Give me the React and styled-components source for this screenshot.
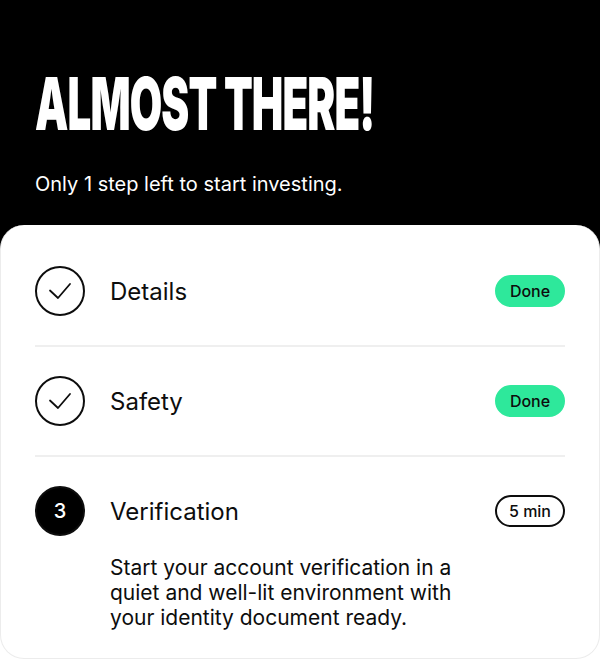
import React from 'react';
import styled, { createGlobalStyle } from 'styled-components';

const GlobalStyle = createGlobalStyle`
  * {
    box-sizing: border-box;
  }

  body {
    margin: 0;
    background: #ffffff;
    font-family: 'Inter', 'Roboto', sans-serif;
    color: #0d0d0d;
  }
`;

const steps = [
  { id: 1, title: 'Details', status: 'done' },
  { id: 2, title: 'Safety', status: 'done' },
  {
    id: 3,
    title: 'Verification',
    status: 'current',
    time: '5 min',
    text: 'Start your account verification in a quiet and well-lit environment with your identity document ready.',
  },
];

const CheckIcon = () => (
  <svg width="24" height="18" viewBox="0 0 24 18" fill="none">
    <path
      d="M2 8.5l8 7.5L22 2"
      stroke="#0d0d0d"
      strokeWidth="1.8"
      strokeLinecap="round"
      strokeLinejoin="round"
    />
  </svg>
);

const App = () => {
  return (
    <Page>
      <GlobalStyle />
      <Hero>
        <Heading>
          <span>ALMOST THERE!</span>
        </Heading>
        <Subtitle>Only 1 step left to start investing.</Subtitle>
      </Hero>

      <Card>
        {steps.map((step, i) => (
          <Step key={step.id} last={i === steps.length - 1}>
            <Marker current={step.status === 'current'}>
              {step.status === 'done' ? <CheckIcon /> : step.id}
            </Marker>
            <Content>
              <TitleRow>
                <Title>{step.title}</Title>
                {step.status === 'done' ? (
                  <Badge done>Done</Badge>
                ) : (
                  <Badge>{step.time}</Badge>
                )}
              </TitleRow>
              {step.text && <Description>{step.text}</Description>}
            </Content>
          </Step>
        ))}
      </Card>
    </Page>
  );
};

const Page = styled.div`
  width: 600px;
  min-height: 661px;
  background: #ffffff;
`;

const Hero = styled.header`
  background: #000000;
  padding: 64px 35px 72px;
  color: #ffffff;
`;

const Heading = styled.h1`
  margin: 0;
  height: 80px;
  line-height: 80px;
  font-family: 'Inter', 'Liberation Sans', sans-serif;
  font-weight: 900;
  font-size: 73px;
  letter-spacing: -1.5px;
  white-space: nowrap;

  span {
    display: inline-block;
    transform: scaleX(0.575);
    transform-origin: left center;
  }
`;

const Subtitle = styled.p`
  margin: 28px 0 0;
  font-size: 20px;
  line-height: 24px;
  font-weight: 400;
`;

const Card = styled.section`
  position: relative;
  margin-top: -43px;
  background: #ffffff;
  border: 1px solid #ececec;
  border-top: none;
  border-radius: 24px;
  padding: 12px 34px 0;
`;

const Step = styled.div`
  display: flex;
  align-items: flex-start;
  gap: 25px;
  padding: 29px 0 ${(p) => (p.last ? '28px' : '29px')};
  border-bottom: ${(p) => (p.last ? 'none' : '2px solid #efefef')};
`;

const Marker = styled.div`
  flex: 0 0 50px;
  width: 50px;
  height: 50px;
  border-radius: 50%;
  display: flex;
  align-items: center;
  justify-content: center;
  border: 2px solid #0d0d0d;
  background: ${(p) => (p.current ? '#000000' : '#ffffff')};
  color: #ffffff;
  font-size: 20px;
  font-weight: 500;
`;

const Content = styled.div`
  flex: 1;
  display: flex;
  flex-direction: column;
`;

const TitleRow = styled.div`
  height: 50px;
  display: flex;
  align-items: center;
  justify-content: space-between;
`;

const Title = styled.span`
  font-size: 24px;
  font-weight: 400;
  color: #0d0d0d;
`;

const Badge = styled.span`
  display: inline-flex;
  align-items: center;
  justify-content: center;
  height: 32px;
  min-width: 70px;
  padding: 0 12px;
  border-radius: 16px;
  font-size: 16px;
  font-weight: 500;
  color: #0d0d0d;
  background: ${(p) => (p.done ? '#2ee89b' : '#ffffff')};
  border: 2px solid ${(p) => (p.done ? '#2ee89b' : '#0d0d0d')};
`;

const Description = styled.p`
  margin: 19px 0 0;
  max-width: 370px;
  font-size: 21px;
  line-height: 25px;
  color: #0d0d0d;
`;

export default App;
